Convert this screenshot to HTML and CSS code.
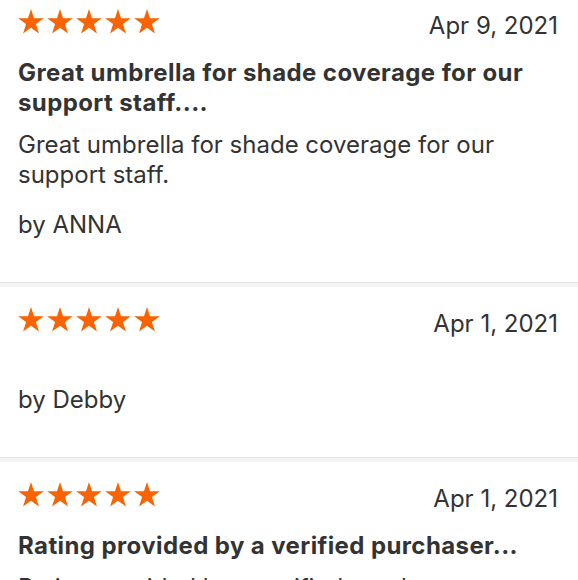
FILE: index.html
```html
<!DOCTYPE html>
<html lang="en">
<head>
<meta charset="utf-8">
<title>Reviews</title>
<link rel="stylesheet" href="styles.css">
</head>
<body>
<svg class="defs" width="0" height="0" aria-hidden="true">
  <defs>
    <polygon id="star" points="13,0 16.03,9.33 25.84,9.33 17.91,15.09 20.94,24.42 13,18.66 5.06,24.42 8.09,15.09 0.16,9.33 9.97,9.33"/>
  </defs>
</svg>
<main class="reviews">
  <article class="review review-first">
    <div class="review-head">
      <svg class="stars" width="143" height="25" viewBox="0 0 143 25" aria-label="5 out of 5 stars">
        <use href="#star" x="0"/>
        <use href="#star" x="29"/>
        <use href="#star" x="58"/>
        <use href="#star" x="87"/>
        <use href="#star" x="116"/>
      </svg>
      <span class="review-date">Apr 9, 2021</span>
    </div>
    <h3 class="review-title">Great umbrella for shade coverage for our support staff....</h3>
    <p class="review-body">Great umbrella for shade coverage for our support staff.</p>
    <p class="review-by">by ANNA</p>
  </article>
  <article class="review">
    <div class="review-head">
      <svg class="stars" width="143" height="25" viewBox="0 0 143 25" aria-label="5 out of 5 stars">
        <use href="#star" x="0"/>
        <use href="#star" x="29"/>
        <use href="#star" x="58"/>
        <use href="#star" x="87"/>
        <use href="#star" x="116"/>
      </svg>
      <span class="review-date">Apr 1, 2021</span>
    </div>
    <p class="review-by">by Debby</p>
  </article>
  <article class="review">
    <div class="review-head">
      <svg class="stars" width="143" height="25" viewBox="0 0 143 25" aria-label="5 out of 5 stars">
        <use href="#star" x="0"/>
        <use href="#star" x="29"/>
        <use href="#star" x="58"/>
        <use href="#star" x="87"/>
        <use href="#star" x="116"/>
      </svg>
      <span class="review-date">Apr 1, 2021</span>
    </div>
    <h3 class="review-title">Rating provided by a verified purchaser...</h3>
    <p class="review-body">Rating provided by a verified purchaser</p>
    <p class="review-by">by Customer</p>
  </article>
</main>
</body>
</html>
```

FILE: styles.css
```css
html, body {
  margin: 0;
  padding: 0;
  background: #fff;
}

body {
  font-family: Inter, "Liberation Sans", Arial, sans-serif;
  color: #333;
  font-size: 24px;
  line-height: 30px;
  overflow: hidden;
  height: 580px;
}

.defs {
  position: absolute;
  width: 0;
  height: 0;
  overflow: hidden;
}

.reviews {
  display: flex;
  flex-direction: column;
}

.review {
  display: flex;
  flex-direction: column;
  padding: 19px 18px 42px 20px;
  border-bottom: 1px solid #e6e6e6;
  box-shadow: 0 4px 0 #f4f4f4;
  margin-bottom: 5px;
}

.review-first {
  padding-top: 9px;
}

.review-head {
  display: flex;
  justify-content: space-between;
  align-items: baseline;
  margin-left: -2px;
}

.stars {
  display: block;
  fill: #f96302;
  margin-bottom: 1px;
}

.review-date {
  font-size: 24px;
  line-height: 30px;
  margin-right: 2px;
}

.review-title {
  margin: 17px 0 0 -2px;
  font-size: 24px;
  line-height: 30px;
  font-weight: 700;
  letter-spacing: 0.4px;
}

.review-body {
  margin: 12px 0 0 -2px;
}

.review-by {
  margin: 20px 0 0 -2px;
}

.review-head + .review-by {
  margin-top: 46px;
}
```
